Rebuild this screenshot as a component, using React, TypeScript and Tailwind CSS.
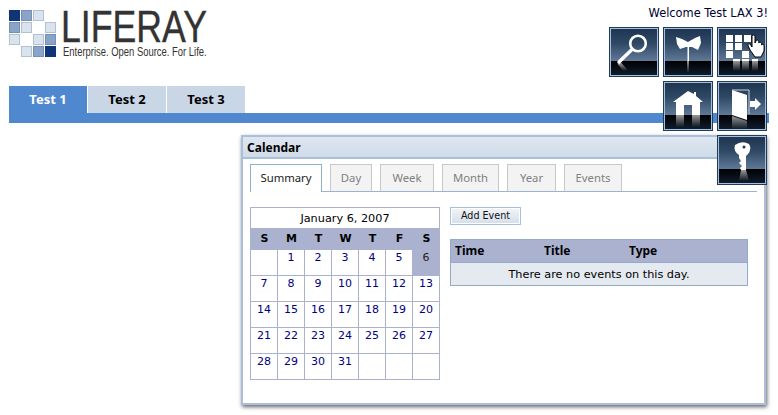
import React from 'react';

const font = { fontFamily: '"DejaVu Sans", sans-serif' };
const noto = { fontFamily: '"Noto Sans", sans-serif' };

const logoCells = [
  ['d', 'm', 'l', ''],
  ['m', 'l', '', 'l'],
  ['l', '', 'l', 'm'],
  ['', 'l', 'm', 'd'],
];

const cellClass: Record<string, string> = {
  d: 'bg-[#0f3478] border-[#0f3478]',
  m: 'bg-[#89a4c8] border-[#7590b5]',
  l: 'bg-[#d9e3ee] border-[#b3c1d1]',
};

const weeks = [
  ['', '1', '2', '3', '4', '5', '6'],
  ['7', '8', '9', '10', '11', '12', '13'],
  ['14', '15', '16', '17', '18', '19', '20'],
  ['21', '22', '23', '24', '25', '26', '27'],
  ['28', '29', '30', '31', '', '', ''],
];

const Fade: React.FC<{ id: string }> = ({ id }) => (
  <defs>
    <linearGradient id={id} x1="0" y1="0" x2="0" y2="1">
      <stop offset="0" stopColor="#fff" stopOpacity="0.6" />
      <stop offset="1" stopColor="#fff" stopOpacity="0" />
    </linearGradient>
  </defs>
);

const Tile: React.FC<{ className: string; children: React.ReactNode }> = ({ className, children }) => (
  <div className={`absolute w-[50px] h-[50px] border border-[#233a58] ${className}`}>
    <div className="w-full h-full border border-[#a3c0e0] bg-[linear-gradient(to_bottom,#1f3550_0%,#2e4864_30%,#5e7896_69%,#000000_69%,#101c2c_100%)]">
      <svg width="46" height="46" viewBox="0 0 46 46">
        {children}
      </svg>
    </div>
  </div>
);

const App: React.FC = () => {
  return (
    <div className="relative w-[778px] h-[415px] overflow-hidden bg-white text-black" style={font}>
      {/* logo + welcome */}
      <div className="flex justify-between h-[86px] pl-[9px] pr-[10px] pt-[10px]">
        <div className="flex gap-[8px]">
          <div className="grid grid-cols-[repeat(4,11px)] auto-rows-[11px] gap-px h-[47px]">
            {logoCells.flat().map((c, i) => (
              <div key={i} className={c ? `border ${cellClass[c]}` : ''} />
            ))}
          </div>
          <div className="w-[146px] text-[#333333]" style={{ fontFamily: '"Liberation Sans", sans-serif' }}>
            <div className="text-[44px] leading-[34px] h-[34px] origin-left scale-x-[0.81] whitespace-nowrap -ml-[3px] [-webkit-text-stroke:0.4px_#333333]">LIFERAY</div>
            <div className="text-[12px] leading-[14px] mt-[1px] -ml-[1px] origin-left scale-x-[0.786] whitespace-nowrap">Enterprise. Open Source. For Life.</div>
          </div>
        </div>
        <div className="text-[11.4px] leading-[14px] -mt-[4px] text-[#000033]">Welcome Test LAX 3!</div>
      </div>

      {/* nav */}
      <div className="pl-[9px] pr-[9px]">
        <div className="flex gap-px h-[27px] text-[13px] font-bold" style={noto}>
          <div className="w-[78px] flex items-center justify-center bg-[#5088d0] text-white">Test 1</div>
          <div className="w-[78px] flex items-center justify-center bg-[#c9d6e6]">Test 2</div>
          <div className="w-[78px] flex items-center justify-center bg-[#c9d6e6]">Test 3</div>
        </div>
        <div className="h-[10px] bg-[#5088d0]" />
      </div>

      {/* portlet */}
      <div className="ml-[241px] mt-[12px] w-[525px] h-[270px] bg-white border-2 border-[#a9bfdc] shadow-[1px_2px_4px_#666666]">
        <div className="h-[22px] bg-[linear-gradient(to_bottom,#dfe7f0,#cfdbe8)] border-b-2 border-[#a9bfdc] pl-[4px] text-[12px] leading-[21px] font-bold" style={noto}>Calendar</div>
        <div className="px-[7px] pt-[5px]">
          <div className="flex gap-[8px] h-[28px] border-b border-[#9db3cf] text-[11.3px]" style={noto}>
            <div className="w-[72px] h-[28px] flex items-center justify-center bg-white border border-b-0 border-[#8fb0d5] text-[#222222]">Summary</div>
            <div className="w-[42px] h-[27px] flex items-center justify-center bg-[#f3f3f3] border border-b-0 border-[#c8c8c8] text-[#808080]">Day</div>
            <div className="w-[54px] h-[27px] flex items-center justify-center bg-[#f3f3f3] border border-b-0 border-[#c8c8c8] text-[#808080]">Week</div>
            <div className="w-[57px] h-[27px] flex items-center justify-center bg-[#f3f3f3] border border-b-0 border-[#c8c8c8] text-[#808080]">Month</div>
            <div className="w-[49px] h-[27px] flex items-center justify-center bg-[#f3f3f3] border border-b-0 border-[#c8c8c8] text-[#808080]">Year</div>
            <div className="w-[58px] h-[27px] flex items-center justify-center bg-[#f3f3f3] border border-b-0 border-[#c8c8c8] text-[#808080]">Events</div>
          </div>

          <div className="flex mt-[15px] gap-[10px]">
            {/* month grid */}
            <div className="w-[190px] border-l border-t border-[#abb2d0]">
              <div className="h-[20px] border-r border-[#abb2d0] text-center text-[11.25px] leading-[21px]">January 6, 2007</div>
              <div className="grid grid-cols-7 h-[22px] bg-[#abb2d0] text-[11px] font-bold leading-[22px] text-center">
                {['S', 'M', 'T', 'W', 'T', 'F', 'S'].map((d, i) => (
                  <div key={i}>{d}</div>
                ))}
              </div>
              {weeks.map((w, i) => (
                <div key={i} className="grid grid-cols-7 h-[26px]">
                  {w.map((d, j) => (
                    <div
                      key={j}
                      className={
                        d === '6'
                          ? 'bg-[#abb2d0] border-b border-r border-[#abb2d0] text-center text-[11px] leading-[14px] pt-[1px] text-[#222222]'
                          : 'border-b border-r border-[#abb2d0] text-center text-[11px] leading-[14px] pt-[1px] text-[#000080]'
                      }
                    >
                      {d}
                    </div>
                  ))}
                </div>
              ))}
            </div>

            {/* events */}
            <div className="w-[298px]">
              <div className="w-[71px] h-[18px] border border-[#a9bfdc] p-px">
                <div className="h-full bg-[linear-gradient(to_bottom,#f0f3f7,#d5e0ec)] text-center text-[9.6px] leading-[14px] text-[#111111]">Add Event</div>
              </div>
              <div className="mt-[14px] border border-[#94aacb]">
                <div className="relative h-[23px] bg-[#abb2d0] border-b border-[#94aacb] text-[12px] font-bold leading-[22px]" style={noto}>
                  <span className="absolute left-[4px]">Time</span>
                  <span className="absolute left-[93px]">Title</span>
                  <span className="absolute left-[178px]">Type</span>
                </div>
                <div className="h-[22px] bg-[#e5eaf1] text-center text-[11.25px] leading-[23px]">There are no events on this day.</div>
              </div>
            </div>
          </div>
        </div>
      </div>

      {/* floating dock, sits over the nav bar and portlet */}
      <Tile className="left-[609px] top-[27px]">
        <Fade id="a" />
        <circle cx="27" cy="14.5" r="7.8" fill="none" stroke="#fff" strokeWidth="2.6" />
        <path d="M21 20.5 L8 33" stroke="#fff" strokeWidth="3.5" strokeLinecap="round" />
        <path d="M8 34 L15 42" stroke="url(#a)" strokeWidth="3.5" />
      </Tile>
      <Tile className="left-[663px] top-[27px]">
        <Fade id="b" />
        <path d="M11 8 L17 10 L23 13 L30 9 L35 7 L36 14 L33 21 L27 18 L21 18 L15 20 L12 15 Z" fill="#fff" />
        <rect x="22.5" y="18" width="1.5" height="14" fill="#fff" />
        <rect x="22" y="32" width="2" height="12" fill="url(#b)" />
      </Tile>
      <Tile className="left-[717px] top-[27px]">
        <Fade id="c" />
        <path
          d="M7 6h7v7h-7zM16 6h7v7h-7zM25 6h7v7h-7zM7 14h7v7h-7zM16 14h7v7h-7zM7 22h7v7h-7zM23 22h7v7h-7zM14 30h7v2h-7zM23 30h7v2h-7zM33 30h6v2h-6z"
          fill="#fff"
        />
        <path d="M14 32h7v10h-7zM23 32h7v10h-7zM33 32h6v10h-6z" fill="url(#c)" />
        <path
          d="M33 7.5 a1.5 1.5 0 0 1 3 0 V14 l1 -2 a1.4 1.4 0 0 1 2.7 .4 l.2 1.6 a1.4 1.4 0 0 1 2.6 .6 l.2 1.4 a1.3 1.3 0 0 1 2.4 .8 L45 22 L42 28 H36 L31 21 L29 16.5 a1.3 1.3 0 0 1 2.2 -1.2 L33 18 Z"
          fill="#fff"
          stroke="#000"
          strokeWidth="1"
        />
      </Tile>
      <Tile className="left-[663px] top-[81px]">
        <Fade id="d" />
        <path d="M23 8 L29 11 V9 H31 V13 L38 19 H35 V32 H27 V22 H19 V32 H11 V19 H8 Z" fill="#fff" />
        <path d="M11 32h8v12h-8zM27 32h8v12h-8z" fill="url(#d)" />
      </Tile>
      <Tile className="left-[717px] top-[81px]">
        <Fade id="e" />
        <path d="M13 7 H30 V31" fill="none" stroke="#c7d3e0" strokeWidth="1" />
        <path d="M13 7 L28 12 V37 L13 32 Z" fill="#fff" />
        <path d="M31 18 H36 V15 L42 21 L36 27 V24 H31 Z" fill="#fff" />
        <path d="M13 33 L28 38 V46 H13 Z" fill="url(#e)" />
      </Tile>
      <Tile className="left-[717px] top-[135px]">
        <Fade id="f" />
        <path
          d="M16 8 Q23 3 30 7 Q33 12 29 17 L27 19 V33 H22 L21 31 L23 29 L20 26 L22 24 L20 21 L20 18 Q14 14 16 8 Z"
          fill="#fff"
        />
        <circle cx="25" cy="10" r="1.5" fill="#1f3550" />
        <path d="M22 33 H27 L30 44 H20 Z" fill="url(#f)" />
      </Tile>
    </div>
  );
};

export default App;
